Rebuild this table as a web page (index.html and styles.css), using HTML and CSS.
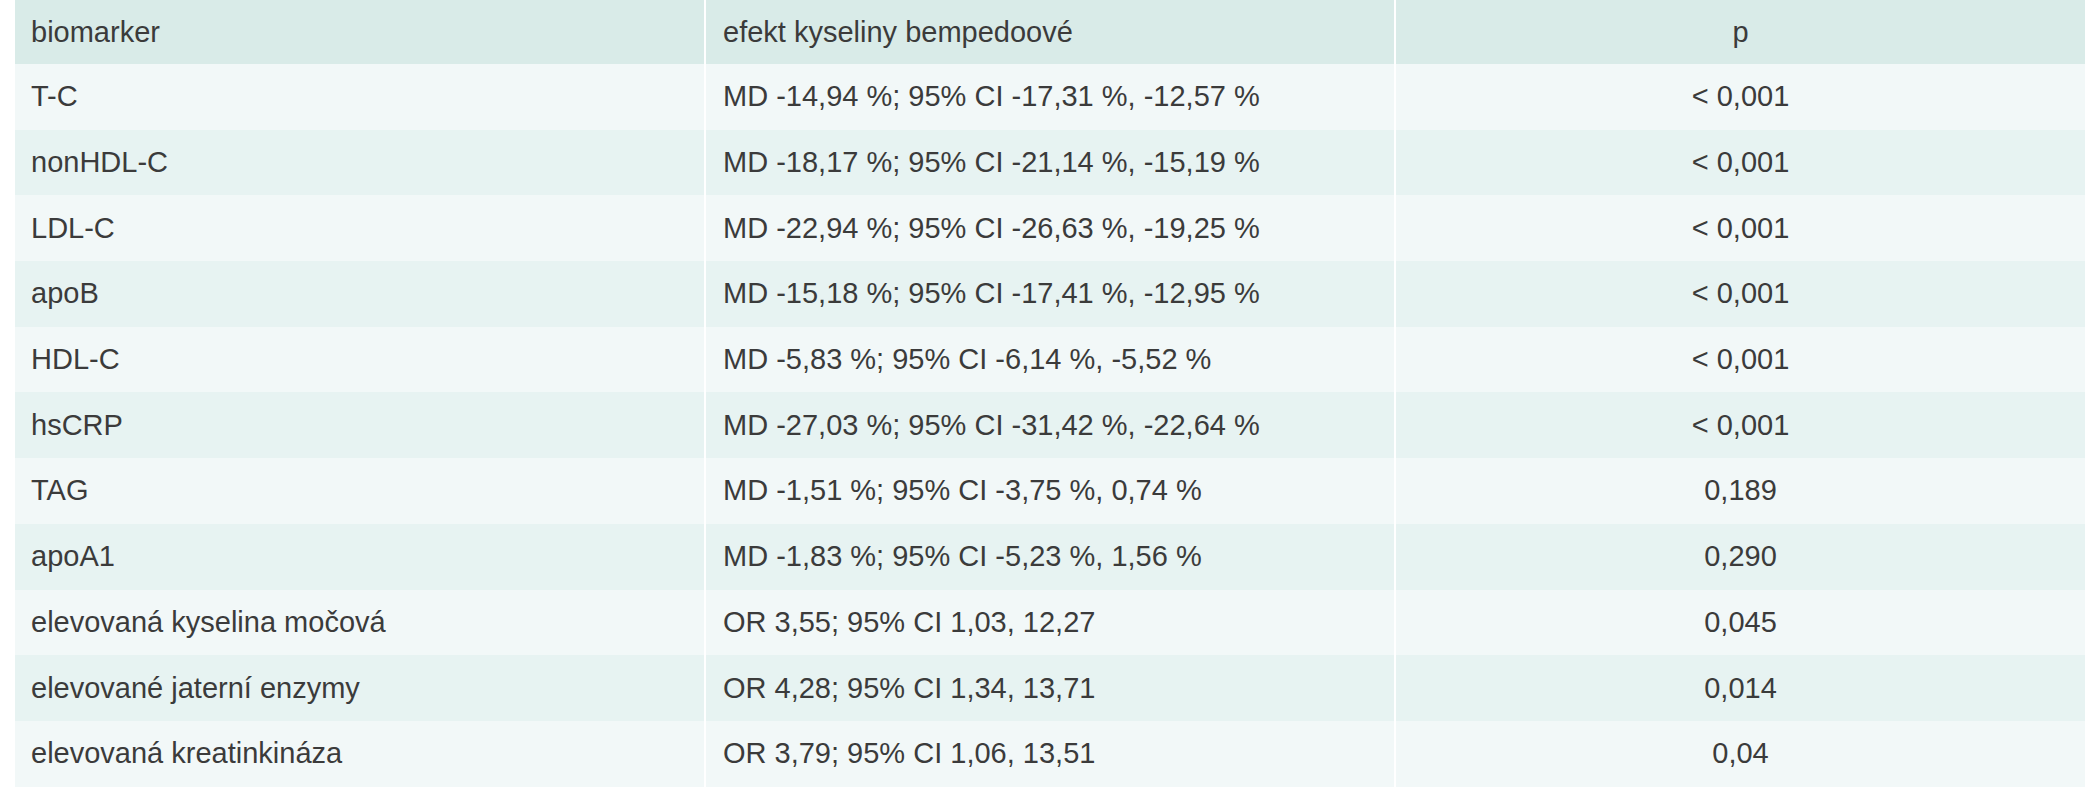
FILE: index.html
```html
<!DOCTYPE html>
<html lang="cs">
<head>
<meta charset="utf-8">
<title>Biomarkery</title>
<link rel="stylesheet" href="styles.css">
</head>
<body>
<table class="data">
  <colgroup><col class="c1"><col class="c2"><col class="c3"></colgroup>
  <thead>
    <tr><th class="name">biomarker</th><th class="effect">efekt kyseliny bempedoové</th><th class="p">p</th></tr>
  </thead>
  <tbody>
    <tr><td class="name">T-C</td><td class="effect">MD -14,94 %; 95% CI -17,31 %, -12,57 %</td><td class="p">&lt; 0,001</td></tr>
    <tr><td class="name">nonHDL-C</td><td class="effect">MD -18,17 %; 95% CI -21,14 %, -15,19 %</td><td class="p">&lt; 0,001</td></tr>
    <tr><td class="name">LDL-C</td><td class="effect">MD -22,94 %; 95% CI -26,63 %, -19,25 %</td><td class="p">&lt; 0,001</td></tr>
    <tr><td class="name">apoB</td><td class="effect">MD -15,18 %; 95% CI -17,41 %, -12,95 %</td><td class="p">&lt; 0,001</td></tr>
    <tr><td class="name">HDL-C</td><td class="effect">MD -5,83 %; 95% CI -6,14 %, -5,52 %</td><td class="p">&lt; 0,001</td></tr>
    <tr><td class="name">hsCRP</td><td class="effect">MD -27,03 %; 95% CI -31,42 %, -22,64 %</td><td class="p">&lt; 0,001</td></tr>
    <tr><td class="name">TAG</td><td class="effect">MD -1,51 %; 95% CI -3,75 %, 0,74 %</td><td class="p">0,189</td></tr>
    <tr><td class="name">apoA1</td><td class="effect">MD -1,83 %; 95% CI -5,23 %, 1,56 %</td><td class="p">0,290</td></tr>
    <tr><td class="name">elevovaná kyselina močová</td><td class="effect">OR 3,55; 95% CI 1,03, 12,27</td><td class="p">0,045</td></tr>
    <tr><td class="name">elevované jaterní enzymy</td><td class="effect">OR 4,28; 95% CI 1,34, 13,71</td><td class="p">0,014</td></tr>
    <tr><td class="name">elevovaná kreatinkináza</td><td class="effect">OR 3,79; 95% CI 1,06, 13,51</td><td class="p">0,04</td></tr>
  </tbody>
</table>
</body>
</html>
```

FILE: styles.css
```css
html, body {
  margin: 0;
  padding: 0;
  background: #ffffff;
}

body {
  font-family: "Liberation Sans", Arial, sans-serif;
  color: #3b3b3b;
}

.data {
  margin-left: 15px;
  width: 2070px;
  table-layout: fixed;
  border-collapse: collapse;
  border-spacing: 0;
  font-size: 29px;
}

.c1, .c2, .c3 { width: 33.333%; }

.data th,
.data td {
  padding: 0;
  font-weight: normal;
  text-align: left;
  vertical-align: middle;
  white-space: nowrap;
}

.data thead tr {
  height: 64px;
  background: #d9ebe8;
}

.data tbody tr {
  height: 65.7px;
}

.data tbody tr:nth-child(odd) { background: #f2f8f8; }
.data tbody tr:nth-child(even) { background: #e7f3f2; }

.data .name { padding-left: 16px; }

.data .effect {
  padding-left: 17px;
  border-left: 2px solid #ffffff;
}

.data .p {
  text-align: center;
  border-left: 2px solid #ffffff;
}
```
